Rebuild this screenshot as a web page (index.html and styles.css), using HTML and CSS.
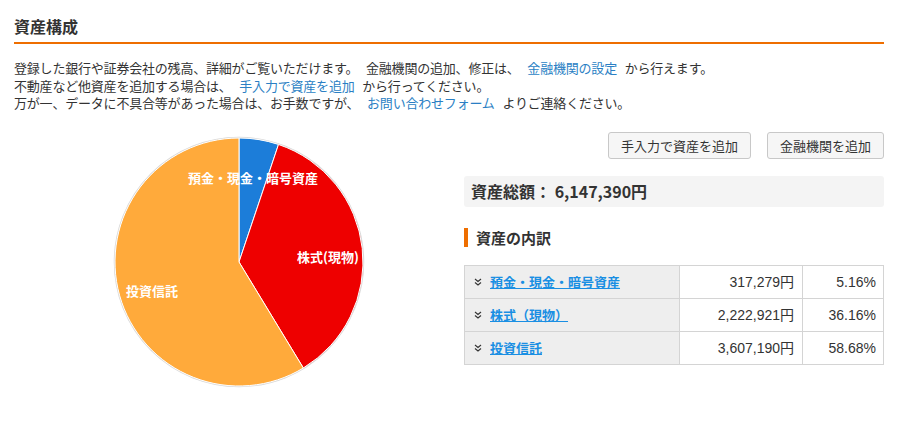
FILE: index.html
```html
<!DOCTYPE html>
<html lang="ja">
<head>
<meta charset="utf-8">
<link rel="stylesheet" href="styles.css">
</head>
<body>
<div class="page">
  <h1 class="title">資産構成</h1>
  <div class="desc">
    <p>登録した銀行や証券会社の残高、詳細がご覧いただけます。 金融機関の追加、修正は、 <a href="#">金融機関の設定</a> から行えます。</p>
    <p>不動産など他資産を追加する場合は、 <a href="#">手入力で資産を追加</a> から行ってください。</p>
    <p>万が一、データに不具合等があった場合は、お手数ですが、 <a href="#">お問い合わせフォーム</a> よりご連絡ください。</p>
  </div>
  <div class="main">
    <div class="chart">
      <svg width="450" height="270" viewBox="0 0 450 270">
        <circle cx="225" cy="130" r="124.5" fill="none" stroke="#d8d8d8" stroke-width="1.5"/>
        <path d="M225,130 L225,6 A124,124 0 0,1 264.5,12.46 Z" fill="#1c7dd9" stroke="#fff" stroke-width="1"/>
        <path d="M225,130 L264.5,12.46 A124,124 0 0,1 289.33,236.01 Z" fill="#ee0000" stroke="#fff" stroke-width="1"/>
        <path d="M225,130 L289.33,236.01 A124,124 0 1,1 225,6 Z" fill="#ffaa3b" stroke="#fff" stroke-width="1"/>
        <text class="lbl" x="239" y="51" text-anchor="middle">預金・現金・暗号資産</text>
        <text class="lbl" x="314" y="130" text-anchor="middle">株式(現物)</text>
        <text class="lbl" x="138" y="164" text-anchor="middle">投資信託</text>
      </svg>
    </div>
    <div class="side">
      <div class="buttons">
        <button class="btn">手入力で資産を追加</button>
        <button class="btn">金融機関を追加</button>
      </div>
      <div class="total">資産総額： 6,147,390円</div>
      <h2 class="sub">資産の内訳</h2>
      <table class="breakdown">
        <tr>
          <td class="name"><svg class="chev" width="8" height="8" viewBox="0 0 8 8"><path d="M1 1 L4 3.5 L7 1 M1 4.5 L4 7 L7 4.5" fill="none" stroke="#333" stroke-width="1.1"/></svg><a href="#">預金・現金・暗号資産</a></td>
          <td class="amt">317,279円</td>
          <td class="pct">5.16%</td>
        </tr>
        <tr>
          <td class="name"><svg class="chev" width="8" height="8" viewBox="0 0 8 8"><path d="M1 1 L4 3.5 L7 1 M1 4.5 L4 7 L7 4.5" fill="none" stroke="#333" stroke-width="1.1"/></svg><a href="#">株式（現物）</a></td>
          <td class="amt">2,222,921円</td>
          <td class="pct">36.16%</td>
        </tr>
        <tr>
          <td class="name"><svg class="chev" width="8" height="8" viewBox="0 0 8 8"><path d="M1 1 L4 3.5 L7 1 M1 4.5 L4 7 L7 4.5" fill="none" stroke="#333" stroke-width="1.1"/></svg><a href="#">投資信託</a></td>
          <td class="amt">3,607,190円</td>
          <td class="pct">58.68%</td>
        </tr>
      </table>
    </div>
  </div>
</div>
</body>
</html>
```
FILE: styles.css
```css
html, body {
  margin: 0;
  padding: 0;
  background: #fff;
}
body {
  font-family: "Noto Sans CJK JP", "Liberation Sans", sans-serif;
  color: #333;
  font-size: 13px;
}
.page {
  width: 870px;
  padding: 14px 0 0 14px;
}
.title {
  margin: 0;
  font-size: 16px;
  font-weight: bold;
  line-height: 24px;
  padding-bottom: 4px;
  border-bottom: 2px solid #ee6e00;
}
.desc {
  margin-top: 15px;
}
.desc p {
  margin: 0;
  line-height: 17.5px;
  font-size: 13px;
  letter-spacing: -0.2px;
  word-spacing: 5px;
}
.desc a {
  color: #2b7fc4;
  text-decoration: none;
}
.main {
  display: grid;
  grid-template-columns: 450px 420px;
  margin-top: 20px;
}
.chart svg {
  display: block;
}
.lbl {
  fill: #fff;
  font-weight: bold;
  font-size: 13px;
  font-family: "Noto Sans CJK JP", "Liberation Sans", sans-serif;
}
.buttons {
  display: flex;
  justify-content: flex-end;
  gap: 16px;
}
.btn {
  font-family: "Noto Sans CJK JP", "Liberation Sans", sans-serif;
  font-size: 13px;
  color: #333;
  background: #f6f6f6;
  border: 1px solid #c8c8c8;
  border-radius: 3px;
  height: 27px;
  padding: 0 12px;
  line-height: 25px;
}
.total {
  margin-top: 17px;
  background: #f4f4f4;
  border-radius: 3px;
  height: 31px;
  line-height: 31px;
  padding-left: 7px;
  font-size: 16px;
  font-weight: bold;
}
.sub {
  margin: 21px 0 0 0;
  border-left: 4px solid #ee6e00;
  padding-left: 8px;
  font-size: 15px;
  font-weight: bold;
  line-height: 19px;
  height: 19px;
}
.breakdown {
  margin-top: 18px;
  width: 420px;
  border-collapse: collapse;
  border: 1px solid #ccc;
}
.breakdown td {
  border: 1px solid #d4d4d4;
  height: 32px;
  padding: 0 7px;
  font-size: 13px;
  line-height: 20px;
}
.breakdown td.name {
  width: 198px;
  background: #eee;
  padding-left: 9px;
}
.breakdown td.amt,
.breakdown td.pct {
  font-family: "Liberation Sans", "Noto Sans CJK JP", sans-serif;
  font-size: 14px;
  text-align: right;
}
.breakdown td.amt {
  width: 107px;
  padding-right: 8px;
}
.breakdown td.pct {
  padding-right: 7px;
}
.chev {
  vertical-align: middle;
  margin-right: 8px;
  position: relative;
  top: -1px;
}
.name a {
  color: #1a8fe3;
  font-weight: bold;
  text-decoration: underline;
}
```
